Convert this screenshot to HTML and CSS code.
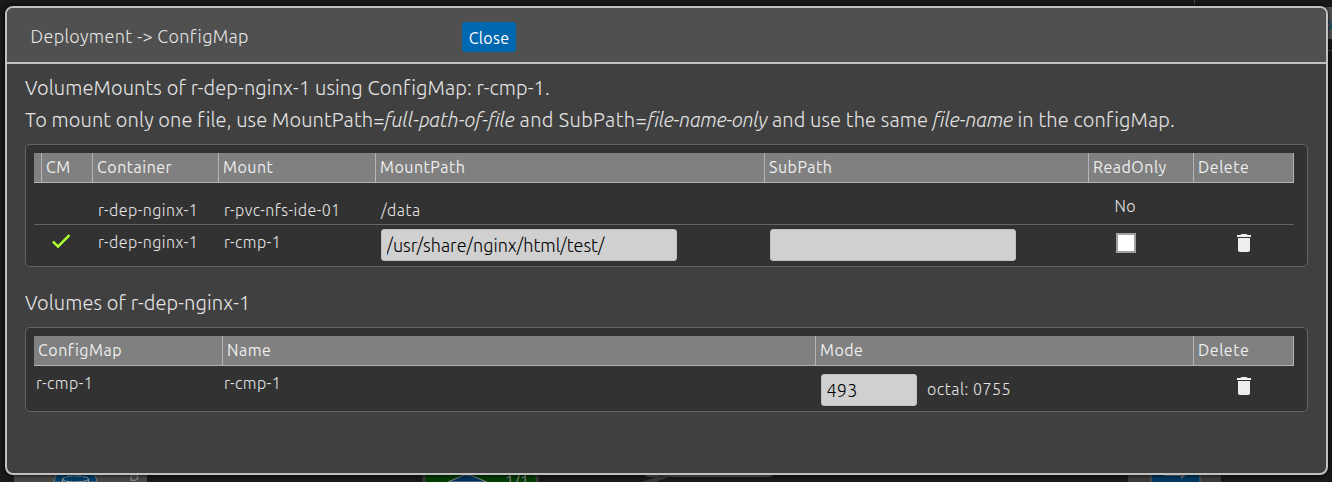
FILE: index.html
```
<!DOCTYPE html>
<html lang="en">
<head>
<meta charset="utf-8">
<title>Deployment -&gt; ConfigMap</title>
<link rel="stylesheet" href="styles.css">
</head>
<body>
<svg class="canvas" width="1332" height="482" viewBox="0 0 1332 482" aria-hidden="true">
  <path d="M1194.5 0v8M1325 50.5h7" stroke="#444"/>
  <path d="M1322 7h10v32h-10z" fill="#565656"/>
  <text x="1323" y="30" class="canvas-label link">o</text>
  <path d="M14 470h133v12H14z" fill="#484848"/>
  <path d="M54 482q1-8 7-10h29q6 2 7 10z" fill="#003e69" stroke="#777"/>
  <ellipse cx="75.500" cy="479" rx="13" ry="3" fill="none" stroke="#999" stroke-dasharray="7 1"/>
  <path d="M62.500 479v4M88.500 479v4" stroke="#999"/>
  <text x="129" y="481" class="canvas-label">B</text>
  <path d="M424 470h113v14H424z" fill="#003c00" stroke="#383838" stroke-width="3"/>
  <path d="M448 482l16-7h6l17 7z" fill="#003461" stroke="#888"/>
  <text x="505" y="487" class="canvas-label">1/1</text>
  <path d="M643 474h132l-5 3H648z" fill="#585858"/>
  <path d="M641 482l18-6h12l-15 6z" fill="#383838"/>
  <path d="M1128 470h93v12h-93z" fill="#3c3c3c"/>
  <rect x="1151" y="468" width="49" height="24" rx="8" fill="#003961" stroke="#666"/>
  <path d="M1163 475h23l-5 4v-3h-15z" fill="#777"/>
</svg>
<div class="dialog">
  <div class="dialog-header">
    <span class="dialog-title">Deployment -&gt; ConfigMap</span>
    <button class="close">Close</button>
  </div>
  <div class="dialog-body">
    <p class="intro">VolumeMounts of r-dep-nginx-1 using ConfigMap: r-cmp-1.</p>
    <p class="intro intro-hint">To mount only one file, use MountPath=<i class="full-path">full-path-of-file</i><span class="sub-label"> and SubPath=</span><i class="file-only">file-name-only</i> and use the same <i class="file-name">file-name</i> in the configMap.</p>
    <div class="panel">
      <div class="row head mounts">
        <div></div><div>CM</div><div>Container</div><div>Mount</div><div>MountPath</div><div>SubPath</div><div>ReadOnly</div><div>Delete</div>
      </div>
      <div class="row mounts first">
        <div></div><div></div><div class="text">r-dep-nginx-1</div><div class="text">r-pvc-nfs-ide-01</div><div class="text">/data</div><div></div><div class="text no">No</div><div></div>
      </div>
      <div class="row mounts second">
        <div></div>
        <div class="check"><svg width="24" height="24" viewBox="0 0 24 24"><path d="M9 16.170L4.830 12l-1.420 1.410L9 19 21 7l-1.410-1.410z" fill="#adff2f" stroke="#adff2f" stroke-width=".7"/></svg></div>
        <div class="text">r-dep-nginx-1</div><div class="text">r-cmp-1</div>
        <div class="field"><input class="path" value="/usr/share/nginx/html/test/"></div>
        <div class="field"><input class="sub"></div>
        <div class="readonly"><input type="checkbox" class="box"></div>
        <div class="trash"><svg width="24" height="24" viewBox="0 0 24 24"><path d="M6 19c0 1.100.9 2 2 2h8c1.100 0 2-.9 2-2V7H6zM19 4h-3.500l-1-1h-5l-1 1H5v2h14z" fill="#eee"/></svg></div>
      </div>
    </div>
    <p class="intro intro-volumes">Volumes of r-dep-nginx-1</p>
    <div class="panel">
      <div class="row head volumes">
        <div>ConfigMap</div><div>Name</div><div>Mode</div><div>Delete</div>
      </div>
      <div class="row volumes entry">
        <div class="text">r-cmp-1</div><div class="text">r-cmp-1</div>
        <div class="field"><input class="mode" value="493"><span class="octal">octal: 0755</span></div>
        <div class="trash"><svg width="24" height="24" viewBox="0 0 24 24"><path d="M6 19c0 1.100.9 2 2 2h8c1.100 0 2-.9 2-2V7H6zM19 4h-3.500l-1-1h-5l-1 1H5v2h14z" fill="#eee"/></svg></div>
      </div>
    </div>
  </div>
</div>
</body>
</html>
```
FILE: styles.css
```
* { box-sizing: border-box; }
body {
  margin: 0;
  padding: 6px 4px 7px 5px;
  width: 1332px;
  height: 482px;
  overflow: hidden;
  background: #191919;
  color: #e4e4e4;
  font-family: "Ubuntu Light", Ubuntu, "Open Sans", "Noto Sans", sans-serif;
  font-weight: 300;
}
.canvas { position: absolute; left: 0; top: 0; }
.canvas-label { fill: #858585; font-size: 16px; font-weight: 400; }
.canvas-label.link { fill: #07517d; }
.dialog {
  position: relative;
  height: 469px;
  border: 2px solid #c0c0c0;
  border-radius: 8px;
  background: #404040;
  overflow: hidden;
  box-shadow: 0 0 5px #000;
}
.dialog-header {
  display: flex;
  height: 56px;
  padding: 14px 0 0 23.5px;
  border-bottom: 2px solid #c0c0c0;
  background: #505050;
}
.dialog-title { width: 431.5px; font-size: 18px; line-height: 29px; letter-spacing: .33px; white-space: nowrap; }
.close {
  width: 54px;
  height: 30px;
  padding: 1px 0 0;
  border: 0;
  border-radius: 3px;
  background: #0068b0;
  color: #fff;
  font: 400 16px Ubuntu, "Open Sans", sans-serif;
  letter-spacing: .3px;
}
.dialog-body { padding: 8px 18px 0; }
.intro { margin: 0; font-size: 20px; line-height: 32px; letter-spacing: .12px; white-space: nowrap; }
.intro-hint { margin-bottom: 8px; }
.full-path { letter-spacing: 0; }
.sub-label { letter-spacing: .38px; }
.file-only { letter-spacing: -.2px; }
.file-name { letter-spacing: -.1px; }
.panel {
  padding: 8px;
  width: 1283px;
  border: 1px solid #646464;
  border-radius: 5px;
  background: #323232;
}
.intro-volumes { margin: 20px 0 8px; }
.row { display: grid; width: 1260px; }
.row.mounts { grid-template-columns: 7px 51px 126px 157px 389px 324px 105px 101px; }
.row.volumes { grid-template-columns: 188px 593px 378px 101px; }
.head {
  height: 30px;
  border-bottom: 1px solid #b4b4b4;
  background: #808080;
  color: #eee;
  font-family: Ubuntu, "Open Sans", sans-serif;
  font-size: 16px;
  font-weight: 400;
  line-height: 28px;
  letter-spacing: .5px;
}
.head > div { padding-left: 4px; border-left: 1px solid #b4b4b4; white-space: nowrap; }
.head > div:first-child { border-left: 0; }
.head > div:last-child { border-right: 1px solid #b4b4b4; }
.text { padding-left: 6px; font-size: 16px; line-height: 24px; letter-spacing: .45px; white-space: nowrap; }
.first { height: 42px; padding-top: 15px; border-bottom: 1px solid #646464; }
.no { padding-left: 26.5px; line-height: 16px; }
.second { height: 33px; }
.second .text { padding-top: 5px; }
.check { padding: 4px 0 0 8px; }
.field { display: flex; padding: 4px 0 0 6px; }
.field input {
  height: 32px;
  padding: 0 4.5px;
  border: 1px solid #c0c0c0;
  border-radius: 3px;
  background: #d0d0d0;
  color: #000;
  font: 300 18px "Ubuntu Light", Ubuntu, "Open Sans", sans-serif;
}
.path { width: 296px; }
.sub { width: 246px; }
.mode { width: 96px; letter-spacing: .2px; }
.readonly { padding: 8px 0 0 28px; }
.box {
  display: block;
  appearance: none;
  width: 20px;
  height: 20px;
  margin: 0;
  border: 2px solid #a0a0a0;
  background: #fff;
}
.trash { padding: 6px 0 0 39px; }
.check svg, .trash svg { display: block; }
.volumes .text { padding: 5px 0 0 2px; }
.entry { height: 37px; }
.entry .field { padding-top: 8px; }
.entry .trash { padding-top: 8px; }
.octal { padding-left: 10px; font-size: 16px; line-height: 30px; letter-spacing: .5px; }
```
